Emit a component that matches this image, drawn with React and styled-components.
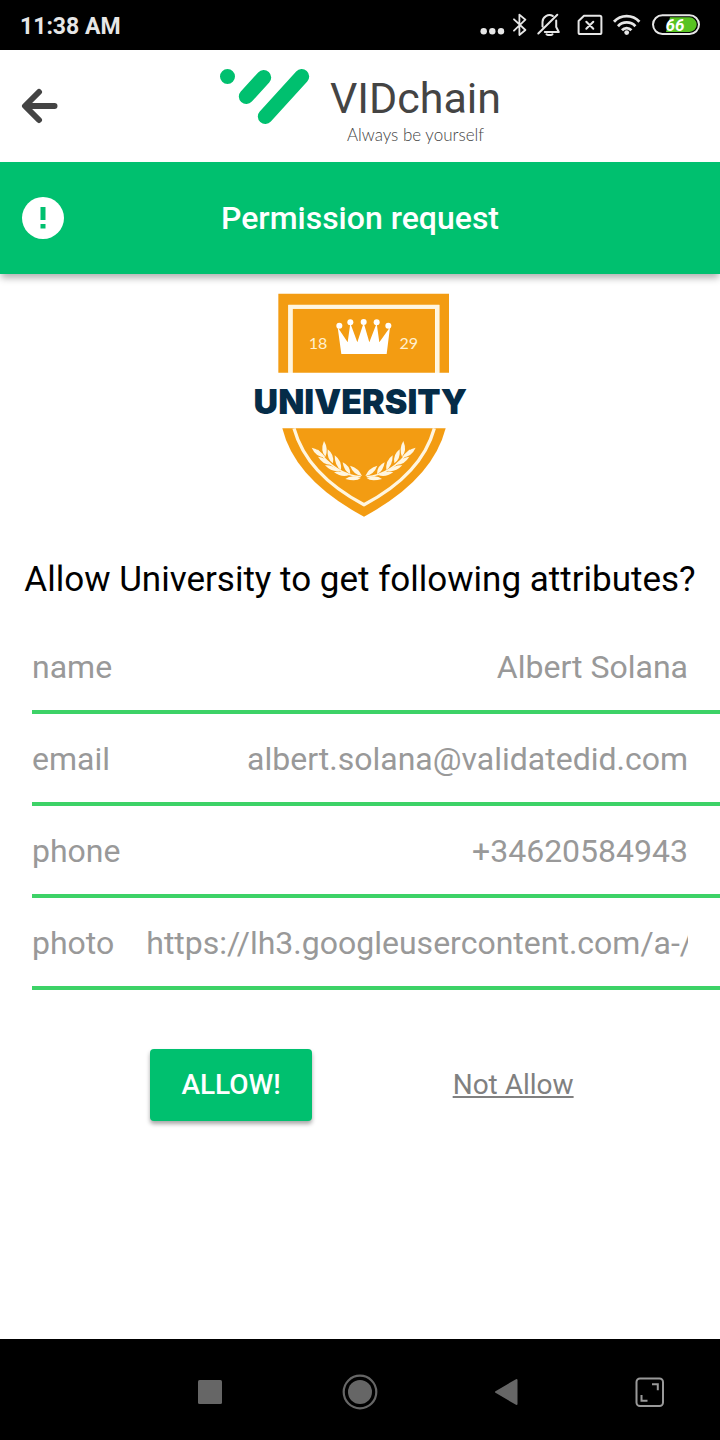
import React from "react";
import styled, { createGlobalStyle } from "styled-components";

const GlobalStyle = createGlobalStyle`
  * { box-sizing: border-box; }
  body { margin: 0; background: #fff; font-family: Roboto, sans-serif; }
`;

const Screen = styled.div`
  display: flex;
  flex-direction: column;
  min-height: 100vh;
`;

const StatusBar = styled.div`
  display: flex;
  align-items: center;
  justify-content: space-between;
  height: 50px;
  padding: 0 20px;
  background: #000;
  color: #e6e6e6;
`;

const Clock = styled.time`
  padding-top: 4px;
  font-size: 23px;
  line-height: 28px;
  font-weight: 700;
`;

const StatusIcons = styled.div`
  display: flex;
  gap: 8px;
`;

const StatusIcon = styled.svg`
  display: block;
  height: 50px;
  fill: none;
  stroke: #e6e6e6;
  stroke-width: 2;
  stroke-linecap: round;
  stroke-linejoin: round;
`;

const Bar = styled.div`
  display: grid;
  grid-template-columns: 1fr auto 1fr;
  align-items: center;
  height: 112px;
  padding: 0 20px;
`;

const BrandBar = styled(Bar).attrs({ as: "header" })`
  background: #fff;
`;

const TitleBar = styled(Bar)`
  background: #00c06f;
  color: #fff;
  box-shadow: 0 5px 7px -1px rgba(0, 0, 0, 0.3);
`;

const BackButton = styled.button`
  justify-self: start;
  padding: 0;
  border: 0;
  background: none;
  cursor: pointer;
`;

const Block = styled.svg`
  display: block;
`;

const Brand = styled.div`
  display: flex;
  gap: 20px;
  padding-top: 6px;
`;

const BrandWords = styled.div`
  display: flex;
  flex-direction: column;
  align-items: center;
  padding-top: 8px;
`;

const BrandName = styled.span`
  font-size: 43px;
  line-height: 44px;
  color: #444;
`;

const Tagline = styled.span`
  font-family: Lato, sans-serif;
  font-size: 17px;
  font-weight: 300;
  line-height: 30px;
  color: #444;
`;

const Title = styled.h1`
  margin: 0;
  font-size: 32px;
  line-height: 40px;
  font-weight: 500;
`;

const Content = styled.main`
  flex: 1;
  display: flex;
  flex-direction: column;
  padding-top: 16px;
`;

const Crest = styled.svg`
  display: block;
  align-self: center;
`;

const Question = styled.h2`
  margin: 36px 0 18px;
  font-size: 35px;
  line-height: 48px;
  font-weight: 400;
  text-align: center;
  color: #000;
`;

const Attributes = styled.dl`
  margin: 0;
  padding-left: 32px;
`;

const Attribute = styled.div`
  display: flex;
  align-items: center;
  gap: 32px;
  height: 92px;
  padding: 2px 32px 0 0;
  border-bottom: 4px solid #3dd267;
  font-size: 32px;
  line-height: 40px;
  color: #999;
`;

const Value = styled.dd`
  flex: 1;
  min-width: 0;
  margin: 0;
  overflow: hidden;
  white-space: nowrap;
  text-align: right;
`;

const Actions = styled.div`
  display: flex;
  justify-content: center;
  align-items: center;
  gap: 141px;
  padding: 59px 0 32px 4px;
`;

const AllowButton = styled.button`
  height: 72px;
  padding: 0 31px;
  border: 0;
  border-radius: 4px;
  background: #00c06f;
  box-shadow: 0 3px 4px rgba(0, 0, 0, 0.35);
  color: #fff;
  font: 500 28px/36px Roboto, sans-serif;
  cursor: pointer;
`;

const DenyLink = styled.a`
  font-size: 28px;
  line-height: 36px;
  color: #808080;
`;

const NavBar = styled.nav`
  display: grid;
  grid-template-columns: 133fr 154fr 145fr 148fr 140fr;
  align-items: center;
  height: 101px;
  padding-top: 4px;
  background: #000;
`;

const NavButton = styled.button`
  justify-self: center;
  padding: 0;
  border: 0;
  background: none;
  cursor: pointer;

  &:first-child {
    grid-column: 2;
  }
`;

const attributes = [
  ["name", "Albert Solana"],
  ["email", "albert.solana@validatedid.com"],
  ["phone", "+34620584943"],
  ["photo", "https://lh3.googleusercontent.com/a-/"],
];

const leaves = [
  "M316 597Q334 582 362 594Q350 606 316 597Z",
  "M330 557Q356 564 366 588Q340 584 330 557Z",
  "M282 577Q304 570 328 585Q306 594 282 577Z",
  "M308 547Q332 558 331 583Q312 574 308 547Z",
  "M255 556Q278 554 300 573Q276 578 255 556Z",
  "M284 526Q306 542 303 570Q284 558 284 526Z",
  "M234 530Q256 532 275 554Q250 556 234 530Z",
  "M263 508Q284 524 279 550Q260 538 263 508Z",
  "M215 503Q240 508 256 532Q228 532 215 503Z",
  "M252 483Q266 506 256 530Q240 512 252 483Z",
];

function LaurelBranch() {
  return (
    <g fill="#fff6e0">
      <path d="M362 590Q290 585 232 510" fill="none" stroke="#fff6e0" strokeWidth="4" />
      {leaves.map((d) => (
        <path key={d} d={d} />
      ))}
    </g>
  );
}

function UniversityCrest() {
  return (
    <Crest width="240" height="230" viewBox="0 30 720 690" role="img" aria-label="University 1829">
      <path d="M115 41H627V278H598V75H145V278H115Z" fill="#f39c12" />
      <path d="M158 86H585V278H158Z" fill="#f39c12" />
      <path d="M151 278V80H592V278" fill="none" stroke="#fff6e0" strokeWidth="12" />
      <path
        d="M304 222L293 142L323 187L331 130L352 187L371 128L388 187L410 130L418 187L450 142L440 222Z"
        fill="#fff"
      />
      <g fill="#fff">
        <circle cx="298" cy="137" r="9" />
        <circle cx="331" cy="127" r="9" />
        <circle cx="371" cy="126" r="9" />
        <circle cx="410" cy="127" r="9" />
        <circle cx="445" cy="137" r="9" />
      </g>
      <g fill="#fff0d0" fontFamily="Lato, sans-serif" fontSize="48" textAnchor="middle">
        <text x="234" y="207">18</text>
        <text x="506" y="207">29</text>
      </g>
      <text x="361" y="401" textAnchor="middle" fontFamily="Inter, sans-serif" fontWeight="900" fontSize="102" fill="#052c48">
        UNIVERSITY
      </text>
      <path d="M127 445H617Q577 600 372 710Q165 600 127 445Z" fill="#f39c12" />
      <path d="M162 445Q200 583 372 674Q545 583 583 445" fill="none" stroke="#fff6e0" strokeWidth="10" />
      <LaurelBranch />
      <g transform="translate(742 0) scale(-1 1)">
        <LaurelBranch />
      </g>
    </Crest>
  );
}

export default function App() {
  return (
    <Screen>
      <GlobalStyle />
      <StatusBar>
        <Clock>11:38 AM</Clock>
        <StatusIcons>
          <StatusIcon width="25" viewBox="0 0 25 50">
            <g fill="#e6e6e6" stroke="none">
              <circle cx="3.7" cy="31.3" r="3.2" />
              <circle cx="12.3" cy="31.3" r="3.2" />
              <circle cx="21" cy="31.3" r="3.2" />
            </g>
          </StatusIcon>
          <StatusIcon width="15" viewBox="0 0 15 50">
            <path d="M1 19.3L12.4 30L6.4 35V14.6L12.4 19.7L1 30.7" strokeWidth="1.8" />
          </StatusIcon>
          <StatusIcon width="26" viewBox="0 0 26 50">
            <path d="M21.3 14.8L2.3 33.5M6.5 26.5V22a7 7 0 0 1 10.3-6M20.2 20.5v6.5l2.6 5H8.8" />
            <path d="M10.5 34.3q3 1.6 6 0" />
          </StatusIcon>
          <StatusIcon width="33" viewBox="0 0 33 50">
            <path d="M14 15.8H29.8a1.6 1.6 0 0 1 1.6 1.6V32.4a1.6 1.6 0 0 1-1.6 1.6H10.2a1.6 1.6 0 0 1-1.6-1.6V21ZM16.3 21.7l7 7M23.3 21.7l-7 7" />
          </StatusIcon>
          <StatusIcon width="32" viewBox="0 0 32 50">
            <g strokeWidth="2.8">
              <path d="M3 21.7a17.3 17.3 0 0 1 25.4 0M7 26.2a12 12 0 0 1 17.4 0M11 30.2a6.4 6.4 0 0 1 9.4 0" strokeLinecap="butt" />
            </g>
            <circle cx="15.7" cy="32.6" r="2.4" fill="#e6e6e6" stroke="none" />
          </StatusIcon>
          <StatusIcon width="49" viewBox="0 0 49 50">
            <path d="M19 17.3H38.4a7.3 7.3 0 0 1 0 14.6H15Z" fill="#58c322" stroke="none" />
            <rect x="2" y="15.2" width="46" height="18.8" rx="9.4" />
            <text x="24" y="31" textAnchor="middle" fontFamily="Roboto, sans-serif" fontStyle="italic" fontWeight="700" fontSize="17" fill="#fff" stroke="none">
              66
            </text>
          </StatusIcon>
        </StatusIcons>
      </StatusBar>

      <BrandBar>
        <BackButton aria-label="Back">
          <Block width="40" height="36" viewBox="0 0 40 36" fill="none" stroke="#444" strokeWidth="6" strokeLinecap="round" strokeLinejoin="round">
            <path d="M19 4L5 18L19 32M6 18H34.5" />
          </Block>
        </BackButton>
        <Brand>
          <Block width="91" height="76" viewBox="0 0 91 76" stroke="#00c06f" strokeWidth="15" strokeLinecap="round">
            <path d="M8.5 8.5h0M44.7 9.5L27.3 28.5M82.7 8.5L46.3 48.5" />
          </Block>
          <BrandWords>
            <BrandName>VIDchain</BrandName>
            <Tagline>Always be yourself</Tagline>
          </BrandWords>
        </Brand>
      </BrandBar>

      <TitleBar>
        <Block width="46" height="46" viewBox="0 0 46 46">
          <circle cx="23" cy="23" r="21" fill="#fff" />
          <path d="M20.5 12h5v13h-5ZM20.5 29h5v4.5h-5Z" fill="#00c06f" />
        </Block>
        <Title>Permission request</Title>
      </TitleBar>

      <Content>
        <UniversityCrest />
        <Question>Allow University to get following attributes?</Question>
        <Attributes>
          {attributes.map(([label, value]) => (
            <Attribute key={label}>
              <dt>{label}</dt>
              <Value>{value}</Value>
            </Attribute>
          ))}
        </Attributes>
        <Actions>
          <AllowButton>ALLOW!</AllowButton>
          <DenyLink href="#deny">Not Allow</DenyLink>
        </Actions>
      </Content>

      <NavBar>
        <NavButton aria-label="Recent apps">
          <Block width="24" height="24" viewBox="0 0 24 24">
            <rect width="24" height="24" rx="1.5" fill="#666" />
          </Block>
        </NavButton>
        <NavButton aria-label="Home">
          <Block width="36" height="36" viewBox="0 0 36 36">
            <circle cx="18" cy="18" r="12" fill="#666" />
            <circle cx="18" cy="18" r="16.3" fill="none" stroke="#666" strokeWidth="2.2" />
          </Block>
        </NavButton>
        <NavButton aria-label="Back">
          <Block width="24" height="28" viewBox="0 0 24 28">
            <path d="M2 14L22.5 2V26Z" fill="#666" stroke="#666" strokeWidth="2" strokeLinejoin="round" />
          </Block>
        </NavButton>
        <NavButton aria-label="Full screen">
          <Block width="30" height="30" viewBox="0 0 30 30" fill="none" stroke="#999" strokeWidth="2">
            <rect x="1.5" y="1.5" width="26.5" height="27.5" rx="3.5" />
            <path d="M17 7.2h5.8v6M6.5 18v5.8h6" />
          </Block>
        </NavButton>
      </NavBar>
    </Screen>
  );
}
